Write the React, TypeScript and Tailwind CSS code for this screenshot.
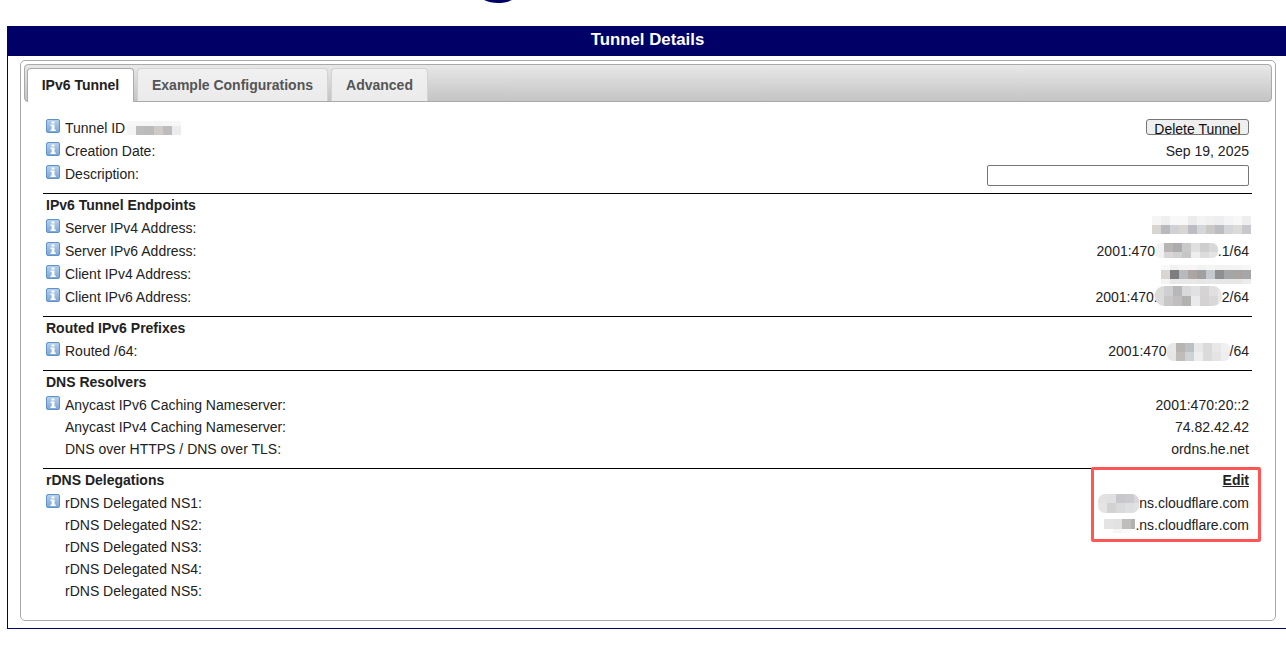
const font = { fontFamily: '"Liberation Sans", Arial, sans-serif' }

type Row = { label: string; icon?: boolean; after?: React.ReactNode; value?: React.ReactNode }

function InfoIcon() {
  return (
    <svg width="14" height="14" viewBox="0 0 14 14" className="shrink-0 block">
      <defs>
        <linearGradient id="infoFill" x1="0" y1="0" x2="0" y2="1">
          <stop offset="0" stopColor="#b8d2ec" />
          <stop offset="1" stopColor="#7ba6d8" />
        </linearGradient>
      </defs>
      <rect x="0.5" y="0.5" width="13" height="13" rx="1.5" fill="url(#infoFill)" stroke="#5f92c8" />
      <rect x="5.5" y="2.5" width="3" height="2" fill="#fff" />
      <path d="M4.5 5.5h4v5h1.2V12H4.5v-1.5h1.2V7H4.5z" fill="#fff" />
    </svg>
  )
}

// pixelated redaction, each row is a list of cell colours
function Mosaic({
  rows,
  heights,
  className = '',
}: {
  rows: string[][]
  heights?: number[]
  className?: string
}) {
  return (
    <span className={`inline-flex flex-col align-middle ${className}`}>
      {rows.map((r, i) => (
        <span key={i} className="flex">
          {r.map((c, j) => (
            <span key={j} className="block shrink-0" style={{ width: 9, height: heights ? heights[i] : 9, background: c }} />
          ))}
        </span>
      ))}
    </span>
  )
}

const endpoints: Row[] = [
  {
    label: 'Server IPv4 Address:',
    icon: true,
    value: (
      <Mosaic
        className="mr-[-2px] -mt-[8px]"
        rows={[
          ['#f5f5f5', '#efefef', '#f8f8f8', '#f8f8f8', '#ececec', '#f3f3f5', '#f0f0f0', '#eeeeee', '#f4f4f6', '#f7f7f7', '#eeeeee'],
          ['#d8d4d0', '#b9babd', '#d0d1d4', '#d9d5d0', '#bcbdc2', '#d4d7da', '#cbc9c8', '#bdbcc0', '#d3d4d8', '#dcdbd6', '#c6c8cc'],
        ]}
      />
    ),
  },
  {
    label: 'Server IPv6 Address:',
    icon: true,
    value: (
      <>
        2001:470:
        <Mosaic
          className="-ml-[4px] -mt-[3px] rounded-[6px] overflow-hidden"
          heights={[9, 6]}
          rows={[
            ['#f2f2f2', '#b8b4b4', '#acacb0', '#c9c9c9', '#dfe0e2', '#cfcdcd', '#d8d8d8'],
            ['#f2f2f2', '#d8d6d6', '#d0d0d0', '#c6c6c6', '#eeeeee', '#dcdcdc', '#e4e4e4'],
          ]}
        />
        .1/64
      </>
    ),
  },
  {
    label: 'Client IPv4 Address:',
    icon: true,
    value: (
      <Mosaic
        className="mr-[-2px]"
        heights={[5, 9, 5]}
        rows={[
          ['#f9f9f9', '#f1f1f1', '#f6f6f8', '#f8f6f6', '#f2f2f2', '#f5f5f5', '#f2f2f2', '#f3f3f3', '#f4f4f4', '#f7f7f7'],
          ['#d9d5d0', '#7d7d80', '#b6babd', '#aca5a2', '#a0a09e', '#c3c9cc', '#8f8e90', '#a3a5a7', '#a7a4a2', '#a6a6a8'],
          ['#f4f4f4', '#e8e8e8', '#e8e8e8', '#e8e8e8', '#e6e6e6', '#e8e8e8', '#e6e6e6', '#e6e6e6', '#e6e6e6', '#ececec'],
        ]}
      />
    ),
  },
  {
    label: 'Client IPv6 Address:',
    icon: true,
    value: (
      <>
        2001:470:
        <Mosaic
          className="-ml-[3px] -mt-[3px] w-[67px] rounded-[9px] overflow-hidden"
          heights={[10, 10]}
          rows={[
            ['#dcdcdc', '#cfcfcf', '#b7b7bb', '#d9d9d9', '#e0e1e2', '#d5d3d3', '#e0e0e0', '#e8e8e8'],
            ['#dcdcdc', '#c8c6c6', '#c0bebe', '#b2b2b0', '#e8eaec', '#d4d2d2', '#d8d8d8', '#e8e8e8'],
          ]}
        />
        2/64
      </>
    ),
  },
]

const rdns: Row[] = [
  {
    label: 'rDNS Delegated NS1:',
    icon: true,
    value: (
      <>
        <Mosaic
          className="w-[41px] rounded-[7px] overflow-hidden"
          heights={[9, 10]}
          rows={[
            ['#e2e2e2', '#e0e0e0', '#c8c8cc', '#cbcbce', '#d8d8da'],
            ['#e4e4e4', '#d2d2d2', '#dadada', '#dde0e2', '#e2e2e2'],
          ]}
        />
        ns.cloudflare.com
      </>
    ),
  },
  {
    label: 'rDNS Delegated NS2:',
    value: (
      <>
        <Mosaic
          className="w-[31px] overflow-hidden"
          heights={[10, 4]}
          rows={[
            ['#e4e4e4', '#e2e2e2', '#c0bebc', '#b4b2b0'],
            ['#ffffff', '#f6f6f6', '#fafafa', '#ffffff'],
          ]}
        />
        .ns.cloudflare.com
      </>
    ),
  },
  { label: 'rDNS Delegated NS3:' },
  { label: 'rDNS Delegated NS4:' },
  { label: 'rDNS Delegated NS5:' },
]

function DataRow({ row }: { row: Row }) {
  return (
    <div className={`flex items-center justify-between px-[3px] ${row.icon ? 'h-[23px]' : 'h-[22px] pb-[1px]'}`}>
      <div className="flex items-center">
        <span className="w-[19px] shrink-0 -mt-[5px]">{row.icon && <InfoIcon />}</span>
        <span>{row.label}</span>
        {row.after}
      </div>
      <div className="flex items-center whitespace-nowrap">{row.value}</div>
    </div>
  )
}

function Section({ title, rows, right }: { title: string; rows: Row[]; right?: React.ReactNode }) {
  return (
    <div className="border-t border-black pb-[7px]">
      <div className="flex items-center justify-between h-[23px] px-[3px] font-bold">
        <span>{title}</span>
        {right}
      </div>
      {rows.map((r) => (
        <DataRow key={r.label} row={r} />
      ))}
    </div>
  )
}

export default function App() {
  return (
    <div className="h-[665px] overflow-hidden bg-white text-[14px] text-[#222]" style={font}>
      <div className="h-[26px] pl-[484px]">
        <svg width="28" height="3" viewBox="0 0 28 3" className="block">
          <path d="M0 0h28c-4 2-9 3-14 3S4 2 0 0z" fill="#000066" />
        </svg>
      </div>

      <div className="ml-[7px] h-[603px] border-l border-b border-[#000066]">
        <div className="-ml-px h-[30px] bg-[#000066] pl-[2px] text-center text-[16.8px] font-bold leading-[27px] text-white">
          Tunnel Details
        </div>

        <div className="ml-[12px] mt-[4px] h-[561px] w-[1256px] rounded-[5px] border border-[#aaaaaa] p-[3px]">
          <div className="flex h-[38px] items-end rounded-[4px] border border-[#aaaaaa] bg-gradient-to-b from-[#e8e8e8] to-[#c4c4c4] pl-[2px] font-bold">
            <div className="-mb-px mr-[3px] flex h-[34px] w-[107px] items-center justify-center rounded-t-[4px] border border-b-0 border-[#aaaaaa] bg-white text-[#212121]">
              IPv6 Tunnel
            </div>
            <div className="mr-[3px] flex h-[33px] w-[191px] items-center justify-center rounded-t-[4px] border border-b-0 border-[#d3d3d3] bg-gradient-to-b from-[#f0f0f0] to-[#ebebeb] text-[#555555]">
              Example Configurations
            </div>
            <div className="flex h-[33px] w-[97px] items-center justify-center rounded-t-[4px] border border-b-0 border-[#d3d3d3] bg-gradient-to-b from-[#f0f0f0] to-[#ebebeb] text-[#555555]">
              Advanced
            </div>
          </div>

          <div className="ml-[19px] mr-[20px] mt-[15px]">
            <div className="pb-[7px]">
              <DataRow
                row={{
                  label: 'Tunnel ID',
                  icon: true,
                  after: (
                    <Mosaic
                      className="ml-[2px] -mt-[1px]"
                      heights={[5, 9]}
                      rows={[
                        ['#f6f6f6', '#f6f6f6', '#f6f6f6', '#f4f4f4', '#f6f6f6', '#f8f8f8'],
                        ['#f4f4f4', '#bdbdbd', '#bbbbbb', '#cdcac8', '#bcbcbc', '#ececec'],
                      ]}
                    />
                  ),
                  value: (
                    <button className="-mt-[3px] h-[16px] w-[103px] overflow-hidden rounded-[3px] border border-[#767676] bg-[#efefef] pt-[1px] text-center leading-[17px] text-[#111]">
                      Delete Tunnel
                    </button>
                  ),
                }}
              />
              <DataRow row={{ label: 'Creation Date:', icon: true, value: 'Sep 19, 2025' }} />
              <DataRow
                row={{
                  label: 'Description:',
                  icon: true,
                  value: <input className="mt-[2px] h-[21px] w-[262px] rounded-[2px] border border-[#767676] bg-white" />,
                }}
              />
            </div>
            <Section title="IPv6 Tunnel Endpoints" rows={endpoints} />
            <Section
              title="Routed IPv6 Prefixes"
              rows={[
                {
                  label: 'Routed /64:',
                  icon: true,
                  value: (
                    <>
                      2001:470:
                      <Mosaic
                        className="-ml-[4px] rounded-[6px] overflow-hidden"
                        rows={[
                          ['#e8e8e8', '#b8b4b2', '#bcc0c4', '#e8e8ea', '#dadada', '#e8e8e8', '#f0f0f0'],
                          ['#e6e6e6', '#c0bcba', '#ced2d6', '#eceef0', '#dcdada', '#e4e4e4', '#eeeeee'],
                        ]}
                      />
                      /64
                    </>
                  ),
                },
              ]}
            />
            <Section
              title="DNS Resolvers"
              rows={[
                { label: 'Anycast IPv6 Caching Nameserver:', icon: true, value: '2001:470:20::2' },
                { label: 'Anycast IPv4 Caching Nameserver:', value: '74.82.42.42' },
                { label: 'DNS over HTTPS / DNS over TLS:', value: 'ordns.he.net' },
              ]}
            />
            <div className="relative">
              <Section
                title="rDNS Delegations"
                rows={rdns}
                right={<span className="underline">Edit</span>}
              />
              <div className="absolute left-[1048px] top-[-1px] h-[75px] w-[170px] rounded-[2px] border-[3px] border-[#ff5555]" />
            </div>
          </div>
        </div>
      </div>
    </div>
  )
}
